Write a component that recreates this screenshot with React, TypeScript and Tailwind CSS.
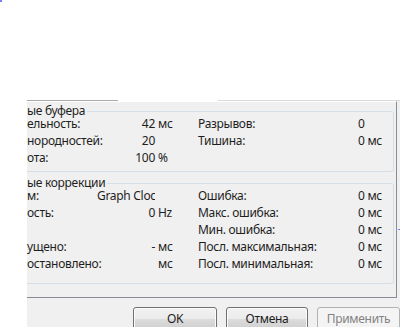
import React from "react";

type Row = { l: string; num?: string; unit?: string; text?: string; l2?: string; v2?: string };

function Cell({ r }: { r: Row }) {
  return (
    <div className="flex items-center h-[17px]">
      <div className="w-[70px] shrink-0 whitespace-nowrap">{r.l}</div>
      {r.text ? (
        <div className="w-[58px] shrink-0 overflow-hidden whitespace-nowrap">{r.text}</div>
      ) : (
        <div className="w-[58px] shrink-0 text-right whitespace-nowrap">{r.num}</div>
      )}
      <div className="w-[43px] shrink-0 pl-[3px] whitespace-nowrap">{r.unit}</div>
      <div className="w-[160px] shrink-0 whitespace-nowrap">{r.l2}</div>
      <div className="flex-1 whitespace-nowrap">{r.v2}</div>
    </div>
  );
}

function Btn({ children, disabled, w }: { children: React.ReactNode; disabled?: boolean; w: string }) {
  return (
    <div
      className={
        disabled
          ? `${w} h-[23px] shrink-0 rounded-[3px] border border-[#adb2b5] bg-[#f4f4f4] text-[#838383] flex items-center justify-center`
          : `${w} h-[23px] shrink-0 rounded-[3px] border border-[#707070] bg-[linear-gradient(#f2f2f2_0%,#ebebeb_50%,#dddddd_50%,#cfcfcf_100%)] shadow-[inset_0_0_0_1px_#fcfcfc] flex items-center justify-center`
      }
    >
      {children}
    </div>
  );
}

export default function App() {
  const g1: Row[] = [
    { l: "ельность:", num: "42", unit: "мс", l2: "Разрывов:", v2: "0" },
    { l: "нородностей:", num: "20", l2: "Тишина:", v2: "0 мс" },
    { l: "ота:", num: "100", unit: "%" },
  ];
  const g2: Row[] = [
    { l: "м:", text: "Graph Clock", l2: "Ошибка:", v2: "0 мс" },
    { l: "ость:", num: "0", unit: "Hz", l2: "Макс. ошибка:", v2: "0 мс" },
    { l: "", l2: "Мин. ошибка:", v2: "0 мс" },
    { l: "ущено:", num: "-", unit: "мс", l2: "Посл. максимальная:", v2: "0 мс" },
    { l: "остановлено:", unit: "мс", l2: "Посл. минимальная:", v2: "0 мс" },
  ];
  return (
    <div className="relative w-[400px] h-[327px] overflow-hidden bg-white text-[12px] tracking-[-0.3px] text-[#1e1e1e] font-['Segoe_UI','Noto_Sans','Open_Sans',sans-serif]">
      <div className="absolute left-0 top-0 w-[2px] h-[2px] bg-[#7b7bff]" />
      <div className="absolute left-[398px] top-[229px] w-[2px] h-[1px] bg-[#7b7bff]" />
      <div className="h-[100px]" />
      <div className="flex h-px">
        <div className="w-[27px]" />
        <div className="w-[91px] bg-[#a9a9a9]" />
        <div className="w-[100px]" />
        <div className="flex-1 bg-[#d9d9d9]" />
      </div>
      <div className="flex h-[226px]">
        <div className="w-[27px] shrink-0 bg-white" />
        <div className="flex-1 bg-[#f0f0f0] flex flex-col">
          <div className="h-[197px] shrink-0 border-t border-t-white border-r border-b border-[#898c95] mr-[3px] pt-[5px]">
            <fieldset className="border border-l-0 border-[#d5dfe5] rounded-r-[3px] mr-[2px] pb-[5px]">
              <legend className="pr-[2px] leading-[8px]">ые буфера</legend>
              <div>
                {g1.map((r, i) => (
                  <Cell key={i} r={r} />
                ))}
              </div>
            </fieldset>
            <fieldset className="mt-[7px] border border-l-0 border-[#d5dfe5] rounded-r-[3px] mr-[2px] pb-[11px]">
              <legend className="pr-[2px] leading-[8px]">ые коррекции</legend>
              <div>
                {g2.map((r, i) => (
                  <Cell key={i} r={r} />
                ))}
              </div>
            </fieldset>
          </div>
          <div className="flex gap-[9px] pl-[106px] pt-[9px]">
            <Btn w="w-[84px]">OK</Btn>
            <Btn w="w-[82px]">Отмена</Btn>
            <Btn w="w-[83px]" disabled>Применить</Btn>
          </div>
        </div>
      </div>
    </div>
  );
}
